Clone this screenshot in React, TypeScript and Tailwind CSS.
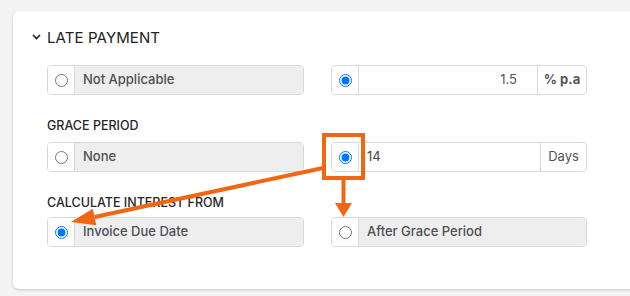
import type { ReactNode } from "react";

function Radio({ checked }: { checked?: boolean }) {
  return (
    <div className="w-[27px] shrink-0 flex items-center justify-center border-r border-[#d9d9d9] bg-white">
      <input type="radio" readOnly checked={!!checked} className="m-0 w-[13px] h-[13px]" />
    </div>
  );
}

function OptionRow({ checked, label }: { checked?: boolean; label: string }) {
  return (
    <div className="flex h-[30px] border border-[#d9d9d9] rounded-[4px] overflow-hidden">
      <Radio checked={checked} />
      <div className="flex-1 flex items-center bg-[#eeeeee] pl-[8px] text-[13px] font-medium text-[#4f4f55]">
        {label}
      </div>
    </div>
  );
}

function InputRow({
  value,
  addon,
  right,
  addonClass,
}: {
  value: string;
  addon: ReactNode;
  right?: boolean;
  addonClass: string;
}) {
  return (
    <div className="flex h-[30px] border border-[#d9d9d9] rounded-[4px] overflow-hidden">
      <Radio checked />
      <div
        className={
          right
            ? "flex-1 flex items-center justify-end pr-[20px] text-[13px] text-[#555555]"
            : "flex-1 flex items-center pl-[8px] text-[13px] text-[#444444]"
        }
      >
        {value}
      </div>
      <div
        className={
          "shrink-0 flex items-center justify-center border-l border-[#d9d9d9] text-[13px] text-[#555555] " +
          addonClass
        }
      >
        {addon}
      </div>
    </div>
  );
}

export default function App() {
  return (
    <div
      className="relative w-[630px] h-[296px] overflow-hidden bg-[#f4f4f4] pt-[11px] pl-[13px]"
      style={{ fontFamily: "Inter, 'Noto Sans', sans-serif" }}
    >
      <div className="w-[640px] h-[278px] bg-white rounded-[6px] shadow-[0_1px_3px_rgba(0,0,0,0.18)] pt-[17px] pl-[19px]">
        {/* Section header */}
        <div className="flex items-center h-[20px] gap-[6px]">
          <svg width="9" height="6" viewBox="0 0 9 6" className="mt-[-2px]">
            <path d="M1 1l3.5 3.5L8 1" fill="none" stroke="#222" strokeWidth="1.6" />
          </svg>
          <span className="text-[15px] text-[#222222] tracking-[0.1px]">LATE PAYMENT</span>
        </div>

        <div className="pl-[15px] mt-[17px] w-[540px] grid grid-cols-[257px_256px] gap-x-[27px]">
          <OptionRow label="Not Applicable" />
          <InputRow value="1.5" right addon="% p.a" addonClass="w-[49px] font-bold" />

          <div className="col-span-2 mt-[23px] mb-[8px] h-[16px] flex items-center text-[12.5px] font-medium text-[#262626]">
            GRACE PERIOD
          </div>
          <OptionRow label="None" />
          <InputRow value="14" addon="Days" addonClass="w-[46px]" />

          <div className="col-span-2 mt-[23px] mb-[6px] h-[16px] flex items-center text-[12.5px] font-medium text-[#262626]">
            CALCULATE INTEREST FROM
          </div>
          <OptionRow checked label="Invoice Due Date" />
          <OptionRow label="After Grace Period" />
        </div>
      </div>

      {/* Annotation overlay */}
      <svg
        className="absolute inset-0 pointer-events-none"
        width="630"
        height="296"
        viewBox="0 0 630 296"
      >
        <rect x="324" y="135" width="39" height="43" fill="none" stroke="#f26611" strokeWidth="4" />
        <line x1="343.5" y1="180" x2="343.5" y2="204" stroke="#f26611" strokeWidth="4" />
        <polygon points="335,203 352,203 343.5,217" fill="#f26611" />
        <line x1="323" y1="168" x2="94.5" y2="217" stroke="#f26611" strokeWidth="4" />
        <polygon points="71,222 96.3,225.3 92.7,208.7" fill="#f26611" />
      </svg>
    </div>
  );
}
